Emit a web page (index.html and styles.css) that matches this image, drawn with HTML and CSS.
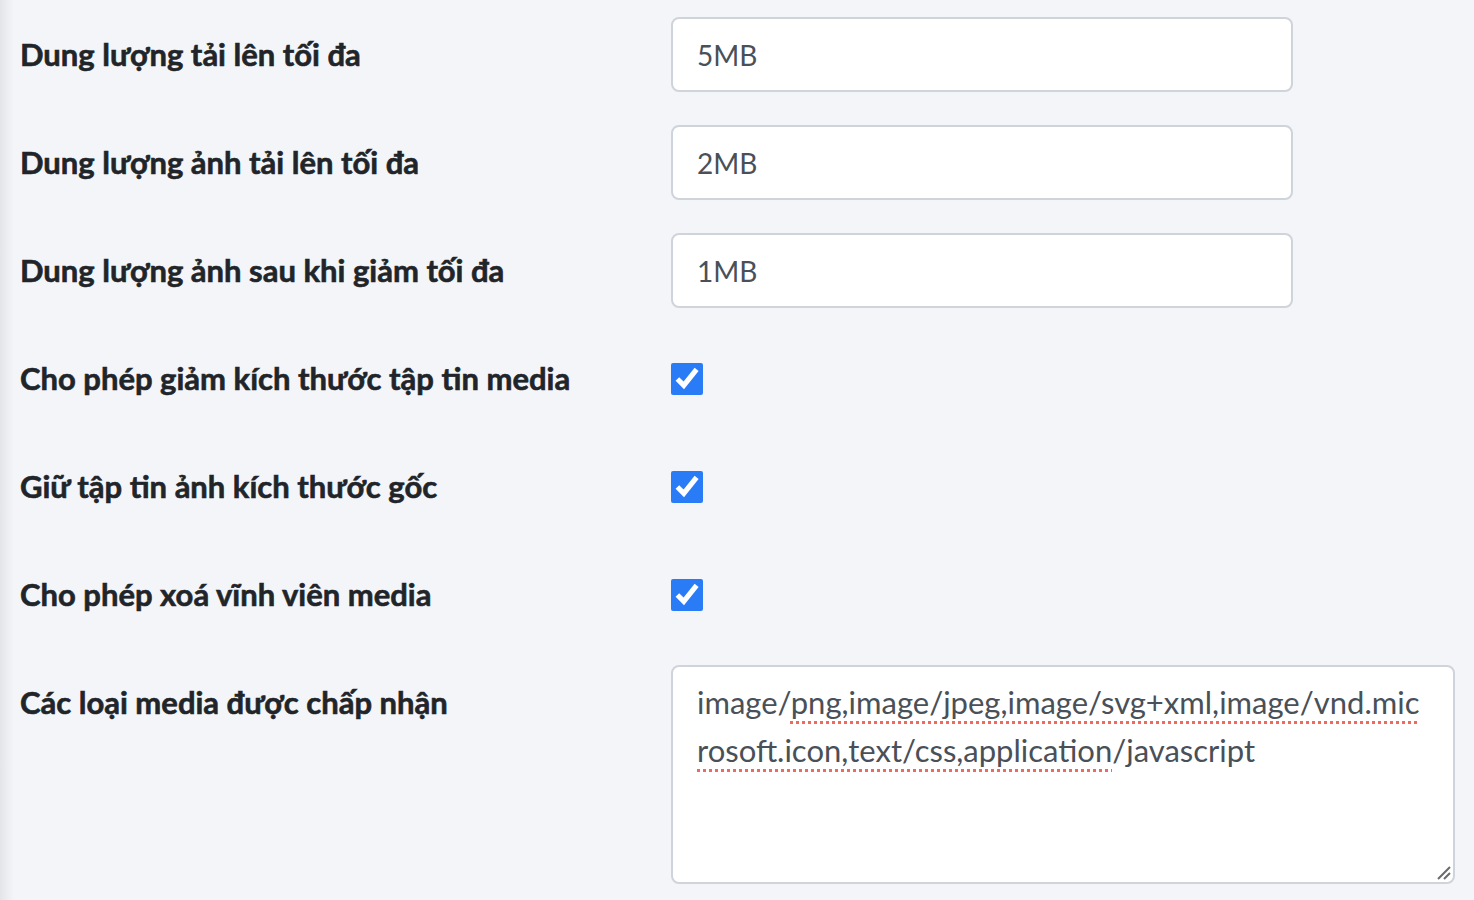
FILE: index.html
```html
<!DOCTYPE html>
<html lang="vi">

<head>
    <title>Cài đặt media</title>
    <meta charset="UTF-8">
    <meta name="viewport" content="width=device-width, initial-scale=1.0">
    <link rel="stylesheet" href="styles.css">
</head>

<body>
    <form class="settings-form">
        <div class="form-row">
            <label class="form-label" for="maxUpload">Dung lượng tải lên tối đa</label>
            <div class="form-field">
                <input class="form-input" type="text" id="maxUpload" value="5MB">
            </div>
        </div>

        <div class="form-row">
            <label class="form-label" for="maxImage">Dung lượng ảnh tải lên tối đa</label>
            <div class="form-field">
                <input class="form-input" type="text" id="maxImage" value="2MB">
            </div>
        </div>

        <div class="form-row">
            <label class="form-label" for="maxResized">Dung lượng ảnh sau khi giảm tối đa</label>
            <div class="form-field">
                <input class="form-input" type="text" id="maxResized" value="1MB">
            </div>
        </div>

        <div class="form-row">
            <label class="form-label" for="allowResize">Cho phép giảm kích thước tập tin media</label>
            <div class="form-field">
                <input class="form-check" type="checkbox" id="allowResize" checked>
            </div>
        </div>

        <div class="form-row">
            <label class="form-label" for="keepOriginal">Giữ tập tin ảnh kích thước gốc</label>
            <div class="form-field">
                <input class="form-check" type="checkbox" id="keepOriginal" checked>
            </div>
        </div>

        <div class="form-row">
            <label class="form-label" for="allowDelete">Cho phép xoá vĩnh viên media</label>
            <div class="form-field">
                <input class="form-check" type="checkbox" id="allowDelete" checked>
            </div>
        </div>

        <div class="form-row">
            <label class="form-label" for="mimeTypes">Các loại media được chấp nhận</label>
            <div class="form-field">
                <div class="form-textarea" id="mimeTypes" role="textbox" aria-multiline="true">image/<span class="misspelled">png,image/jpeg,image/svg+xml,image/vnd.mic<br>rosoft.icon,text/css,application</span>/javascript<svg class="resize-grip" width="16" height="16" viewBox="0 0 16 16"><path d="M15 3L3 15M15 9L9 15" stroke="#6b6b6b" stroke-width="2" fill="none"/></svg></div>
            </div>
        </div>
    </form>
</body>

</html>
```

FILE: styles.css
```css
body {
    margin: 0;
    min-height: 100vh;
    font-family: Lato, "Noto Sans", sans-serif;
    color: #212529;
    background: linear-gradient(to right, #e4e5e8, #f4f5f9 14px);
}

.settings-form {
    display: flex;
    flex-direction: column;
    gap: 33px;
    padding: 17px 19px 0 20px;
}

.form-row {
    display: grid;
    grid-template-columns: 651px 1fr;
    align-items: start;
}

.form-label {
    font-size: 31px;
    font-weight: 700;
    line-height: 75px;
    -webkit-text-stroke: 0.6px #212529;
}

.form-field {
    display: flex;
    align-items: center;
    min-height: 75px;
}

.form-input {
    width: 622px;
    height: 75px;
    box-sizing: border-box;
    padding: 12px 24px;
    border: 2px solid #ced4da;
    border-radius: 8px;
    background-color: #fff;
    font-family: inherit;
    font-size: 28px;
    color: #495057;
}

.form-check {
    width: 32px;
    height: 32px;
    margin: 0;
    accent-color: #2a7cf6;
}

.form-textarea {
    position: relative;
    width: 100%;
    height: 219px;
    box-sizing: border-box;
    padding: 11px 24px;
    border: 2px solid #ced4da;
    border-radius: 8px;
    background-color: #fff;
    font-size: 31px;
    line-height: 48px;
    color: #495057;
    white-space: nowrap;
}

.misspelled {
    text-decoration: underline dotted #ee6a5e;
    text-decoration-thickness: 3px;
    text-underline-offset: 7px;
}

.resize-grip {
    position: absolute;
    right: 2px;
    bottom: 2px;
}
```
